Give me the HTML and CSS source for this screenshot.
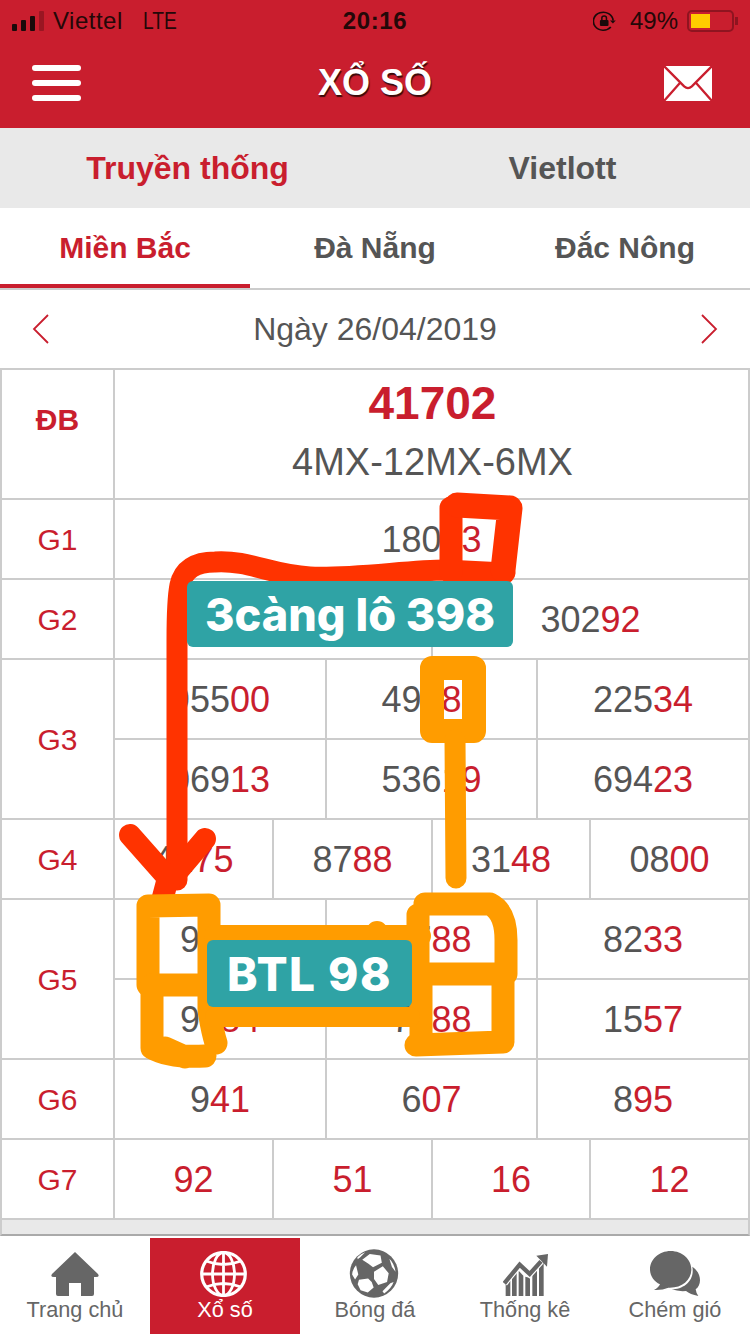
FILE: index.html
```html
<!DOCTYPE html>
<html lang="vi">
<head>
  <meta charset="UTF-8" />
  <title>Xổ số</title>
  <meta name="viewport" content="width=device-width, initial-scale=1.0" />
  <link rel="stylesheet" href="styles.css">
</head>
<body>
  <div class="phone">
    <header class="top">
      <div class="status">
        <div class="status-left">
          <div class="signal"><i></i><i></i><i></i><i class="off"></i></div>
          <span>Viettel</span>
          <span class="lte">LTE</span>
        </div>
        <div class="status-time">20:16</div>
        <div class="status-right">
          <svg class="lock" viewBox="0 0 20 20" width="23" height="20" preserveAspectRatio="none">
            <path d="M15.500 16A8.600 9 0 1 1 17.500 9.500" fill="none" stroke="#1a0a0a" stroke-width="1.500"/>
            <path d="M14.800 9.500h5l-2.500 3z" fill="#1a0a0a"/>
            <rect x="6" y="9" width="7.500" height="6" rx="1" fill="#1a0a0a"/>
            <path d="M7.700 9V7a2 2 0 0 1 4 0v2" fill="none" stroke="#1a0a0a" stroke-width="1.300"/>
          </svg>
          <span>49%</span>
          <div class="battery"><div class="battery-fill"></div></div>
          <div class="battery-tip"></div>
        </div>
      </div>
      <div class="navbar">
        <div class="burger"><i></i><i></i><i></i></div>
        <div class="title">XỔ SỐ</div>
        <svg class="mail" viewBox="0 0 50 36" width="48" height="35" preserveAspectRatio="none">
          <path d="M0 0H50V36H0Z" fill="#fff"/>
          <path d="M0 0L21 21Q25 24.500 29 21L50 0M0 36L17 17M50 36L33 17" fill="none" stroke="#c91e2e" stroke-width="2.400"/>
        </svg>
      </div>
    </header>

    <nav class="tabs">
      <div class="tab active">Truyền thống</div>
      <div class="tab">Vietlott</div>
    </nav>

    <nav class="regions">
      <div class="region active">Miền Bắc</div>
      <div class="region">Đà Nẵng</div>
      <div class="region">Đắc Nông</div>
    </nav>

    <div class="date-row">
      <svg viewBox="0 0 18 30" width="18" height="30"><path d="M16 1L2 15L16 29" fill="none" stroke="#c91e2e" stroke-width="1.800"/></svg>
      <div>Ngày 26/04/2019</div>
      <svg viewBox="0 0 18 30" width="18" height="30"><path d="M2 1L16 15L2 29" fill="none" stroke="#c91e2e" stroke-width="1.800"/></svg>
    </div>

    <section class="results">
      <div class="row row-db">
        <div class="label db">ĐB</div>
        <div class="db-cell">
          <div class="db-num">41702</div>
          <div class="db-code">4MX-12MX-6MX</div>
        </div>
      </div>
      <div class="row">
        <div class="label">G1</div>
        <div class="cells"><div class="cell">180<b>43</b></div></div>
      </div>
      <div class="row">
        <div class="label">G2</div>
        <div class="cells cols-2">
          <div class="cell"></div>
          <div class="cell">302<b>92</b></div>
        </div>
      </div>
      <div class="row row-2">
        <div class="label">G3</div>
        <div class="cells cols-3">
          <div class="cell">955<b>00</b></div>
          <div class="cell">490<b>89</b></div>
          <div class="cell">225<b>34</b></div>
          <div class="cell">069<b>13</b></div>
          <div class="cell">536<b>19</b></div>
          <div class="cell">694<b>23</b></div>
        </div>
      </div>
      <div class="row">
        <div class="label">G4</div>
        <div class="cells cols-4">
          <div class="cell">41<b>75</b></div>
          <div class="cell">87<b>88</b></div>
          <div class="cell">31<b>48</b></div>
          <div class="cell">08<b>00</b></div>
        </div>
      </div>
      <div class="row row-2">
        <div class="label">G5</div>
        <div class="cells cols-3">
          <div class="cell">95<b>21</b></div>
          <div class="cell">77<b>88</b></div>
          <div class="cell">82<b>33</b></div>
          <div class="cell">90<b>84</b></div>
          <div class="cell">71<b>88</b></div>
          <div class="cell">15<b>57</b></div>
        </div>
      </div>
      <div class="row">
        <div class="label">G6</div>
        <div class="cells cols-3">
          <div class="cell">9<b>41</b></div>
          <div class="cell">6<b>07</b></div>
          <div class="cell">8<b>95</b></div>
        </div>
      </div>
      <div class="row">
        <div class="label">G7</div>
        <div class="cells cols-4 red">
          <div class="cell">92</div>
          <div class="cell">51</div>
          <div class="cell">16</div>
          <div class="cell">12</div>
        </div>
      </div>
    </section>

    <footer class="tabbar">
      <div class="tabbar-item">
        <svg viewBox="0 0 48 44" width="48" height="44"><path d="M24 0L47 22Q49 25 45 25H43V42Q43 44 41 44H30V31H18V44H7Q5 44 5 42V25H3Q-1 25 1 22Z" fill="#666"/></svg>
        <span>Trang chủ</span>
      </div>
      <div class="tabbar-item on">
        <svg class="globe" viewBox="0 0 47 46" width="47" height="46" fill="none" stroke="#fff" stroke-width="2.800"><ellipse cx="23.500" cy="23" rx="21.800" ry="21.500" stroke-width="3.200"/><ellipse cx="23.500" cy="23" rx="11" ry="21.500"/><path d="M23.500 2V44M6 10Q23.500 17 41 10M2 23H45M6 36Q23.500 29 41 36"/></svg>
        <span>Xổ số</span>
      </div>
      <div class="tabbar-item">
        <svg class="ball" viewBox="0 0 150 150" width="50" height="49">
          <ellipse cx="75" cy="75" rx="74" ry="74" fill="#666"/>
          <path d="M39 33L62 15L95 20L99 42L72 56L58 45ZM75 70L102 53L120 74L115 101L88 110L75 92ZM29 94L57 90L68 101L74 118L56 133L34 126L25 108ZM20 50L27 78L17 93L8 78Q9 62 20 50ZM24 25Q35 14 48 10L33 25L25 31ZM122 30Q137 44 141 70L130 55ZM125 105L135 101Q129 120 106 136L101 129Z" fill="#fff"/>
        </svg>
        <span>Bóng đá</span>
      </div>
      <div class="tabbar-item">
        <svg viewBox="0 0 135 126" width="45" height="42">
          <path d="M8 126V90L22 76V126ZM27 126V68L41 55V126ZM47 126V50L61 65V126ZM67 126V68L81 72V126ZM88 126V62L102 48V126ZM108 126V38L122 25V126Z" fill="#666"/>
          <path d="M4 88L50 32L80 60L114 22" fill="none" stroke="#fff" stroke-width="20"/>
          <path d="M4 88L50 32L80 60L114 22" fill="none" stroke="#666" stroke-width="13"/>
          <path d="M135 0L100 5L132 38Z" fill="#666"/>
        </svg>
        <span>Thống kê</span>
      </div>
      <div class="tabbar-item">
        <svg viewBox="0 0 150 135" width="50" height="45">
          <path d="M62 0C27 0 0 25 0 55C0 75 12 91 30 100Q26 110 12 117Q38 118 55 110C95 112 124 88 124 55C124 25 97 0 62 0Z" fill="#666"/>
          <path d="M127 47C145 60 150 75 150 88C150 100 145 110 137 115Q138 125 145 135Q120 130 108 120Q85 122 65 115C100 115 135 90 127 47Z" fill="#666"/>
        </svg>
        <span>Chém gió</span>
      </div>
    </footer>

    <!-- hand drawn marks on top of the screenshot -->
    <svg class="marks" viewBox="0 0 750 1334" width="750" height="1334" fill="none" stroke-linecap="round" stroke-linejoin="round">
      <g stroke="#ff3300" stroke-width="21">
        <path d="M177 880V640Q177 600 180 585Q185 562 215 562C250 560 270 575 310 577C350 579 410 570 445 570L505 573"/>
        <path d="M451 572V508" stroke-width="23"/>
        <path d="M457 505L510 508L503 570" stroke-width="25"/>
        <path d="M130 835L168 878L163 897M205 839L172 878" stroke-width="22"/>
      </g>
      <g stroke="#ff9c00">
        <path d="M432 668H474V731H432Z" stroke-width="24"/>
        <path d="M455 740L456 878" stroke-width="21"/>
        <g stroke-width="23">
          <path d="M148 906V985H205M148 906L209 905V1010Q212 1030 216 1043"/>
          <path d="M152 985V1048Q170 1058 205 1056M165 1048L185 1057"/>
          <path d="M425 904H490Q506 912 506 940V974H420M418 915V975M421 975V1044M503 975V1040M416 1045L503 1042"/>
        </g>
        <path d="M215 936H420M377 932V934" stroke-width="22"/>
        <path d="M215 1017H410" stroke-width="20"/>
      </g>
    </svg>
    <div class="note note-lo">3càng lô 398</div>
    <div class="note note-btl">BTL 98</div>
  </div>
</body>
</html>
```

FILE: styles.css
```css
* {
  box-sizing: border-box;
}

html, body {
  margin: 0;
  padding: 0;
  width: 750px;
  height: 1334px;
  overflow: hidden;
  background: #fff;
  font-family: 'Liberation Sans', Arial, sans-serif;
  color: #555;
}

.phone {
  position: relative;
  width: 750px;
  height: 1334px;
  display: flex;
  flex-direction: column;
}

/* top red area */
.top {
  height: 128px;
  background: #c91e2e;
  flex: none;
}

.status {
  height: 42px;
  padding: 0 12px;
  display: flex;
  align-items: center;
  justify-content: space-between;
  font-size: 24px;
  color: #240808;
  position: relative;
}

.status-left,
.status-right {
  display: flex;
  align-items: center;
}

.status-left span {
  letter-spacing: 0.5px;
}

.signal {
  display: flex;
  align-items: flex-end;
  gap: 4px;
  height: 20px;
  margin-right: 9px;
}

.signal i {
  display: block;
  width: 5px;
  background: #1a0a0a;
  border-radius: 1px;
}

.signal i:nth-child(1) { height: 7px; }
.signal i:nth-child(2) { height: 11px; }
.signal i:nth-child(3) { height: 15px; }
.signal i:nth-child(4) { height: 20px; }
.signal .off { background: #9a1622; }

.status-left .lte {
  display: inline-block;
  margin-left: 20px;
  letter-spacing: 0;
  transform: scaleX(0.8);
  transform-origin: left center;
}

.status-time {
  position: absolute;
  left: 0;
  right: 0;
  text-align: center;
  font-weight: 700;
  letter-spacing: 0.6px;
}

.lock {
  margin-right: 14px;
}

.status-right span {
  margin-right: 9px;
}

.battery {
  width: 47px;
  height: 22px;
  border: 2px solid #8f1420;
  border-radius: 5px;
  padding: 2px;
}

.battery-fill {
  width: 19px;
  height: 14px;
  background: #ffcc00;
}

.battery-tip {
  width: 3px;
  height: 8px;
  margin-left: 1px;
  background: #8f1420;
}

.navbar {
  height: 86px;
  padding: 0 38px 4px 32px;
  display: flex;
  align-items: center;
  justify-content: space-between;
  position: relative;
}

.burger {
  display: flex;
  flex-direction: column;
  gap: 9px;
}

.burger i {
  display: block;
  width: 49px;
  height: 6px;
  background: #fff;
  border-radius: 3px;
}

.title {
  position: absolute;
  left: 0;
  right: 0;
  text-align: center;
  font-size: 36px;
  font-weight: 700;
  color: #fff;
  text-shadow: 1px 2px 1px #3a0a0a;
}

/* tabs */
.tabs {
  height: 80px;
  flex: none;
  display: flex;
  background: #e9e9e9;
}

.tab {
  width: 375px;
  display: flex;
  align-items: center;
  justify-content: center;
  font-size: 32px;
  font-weight: 700;
  color: #555;
}

.tab.active {
  color: #c91e2e;
}

.regions {
  height: 82px;
  flex: none;
  display: flex;
  border-bottom: 2px solid #ccc;
}

.region {
  width: 250px;
  height: 80px;
  display: flex;
  align-items: center;
  justify-content: center;
  font-size: 30px;
  font-weight: 700;
  color: #555;
}

.region.active {
  color: #c91e2e;
  box-shadow: inset 0 -4px 0 #c91e2e;
}

.date-row {
  height: 78px;
  flex: none;
  padding: 0 32px;
  display: flex;
  align-items: center;
  justify-content: space-between;
  font-size: 32px;
  color: #555;
}

/* results table */
.results {
  flex: 1;
  border: 2px solid #ccc;
  border-bottom-color: #aaa;
  background: #e9e9e9;
}

.row {
  height: 80px;
  display: flex;
  border-bottom: 2px solid #ccc;
  background: #fff;
}

.row-db {
  height: 130px;
}

.row-2 {
  height: 160px;
}

.row-2 .cells {
  grid-template-rows: 80px 78px;
}

.label {
  width: 113px;
  flex: none;
  padding-top: 2px;
  border-right: 2px solid #ccc;
  display: flex;
  align-items: center;
  justify-content: center;
  font-size: 30px;
  color: #c91e2e;
}

.label.db {
  font-weight: 700;
  padding-top: 0;
  padding-bottom: 29px;
}

.db-cell {
  flex: 1;
  padding-left: 2px;
  text-align: center;
}

.db-num {
  margin-top: 7px;
  font-size: 46px;
  font-weight: 700;
  color: #c91e2e;
  line-height: 52px;
}

.db-code {
  margin-top: 10px;
  font-size: 38px;
  line-height: 46px;
}

.cells {
  flex: 1;
  display: grid;
  grid-template-columns: 1fr;
}

.cols-2 { grid-template-columns: 318px 1fr; }
.cols-3 { grid-template-columns: 212px 211px 1fr; }
.cols-4 { grid-template-columns: 159px 159px 158px 1fr; }

.cell {
  display: flex;
  align-items: center;
  justify-content: center;
  padding-top: 2px;
  font-size: 36px;
  border-right: 2px solid #ccc;
}

.cell:last-child,
.cols-2 .cell:nth-child(2n),
.cols-3 .cell:nth-child(3n),
.cols-4 .cell:nth-child(4n) {
  border-right: 0;
}

.row-2 .cell:nth-child(-n+3) {
  border-bottom: 2px solid #ccc;
}

.cell b,
.red .cell {
  font-weight: 400;
  color: #c91e2e;
}

/* bottom bar */
.tabbar {
  height: 98px;
  flex: none;
  padding-top: 2px;
  display: flex;
  background: #fff;
}

.tabbar-item {
  width: 150px;
  display: flex;
  flex-direction: column;
  align-items: center;
  justify-content: flex-end;
  gap: 1px;
  padding-bottom: 11px;
  font-size: 21.700px;
  color: #666;
}

.tabbar-item.on {
  background: #c91e2e;
  color: #fff;
}

.globe {
  margin: 0 3px -1px 0;
}

.ball {
  margin: 0 2px -2px 0;
}

/* drawn over the page */
.marks {
  position: absolute;
  left: 0;
  top: 0;
}

.note {
  position: absolute;
  background: #2fa3a5;
  color: #fff;
  font-family: Inter, sans-serif;
  font-weight: 800;
  border-radius: 6px;
  display: flex;
  align-items: center;
  justify-content: center;
}

.note-lo {
  left: 187px;
  top: 581px;
  width: 326px;
  height: 66px;
  font-size: 45px;
}

.note-btl {
  left: 207px;
  top: 940px;
  width: 205px;
  height: 67px;
  font-size: 46px;
  letter-spacing: 1.500px;
}
```
